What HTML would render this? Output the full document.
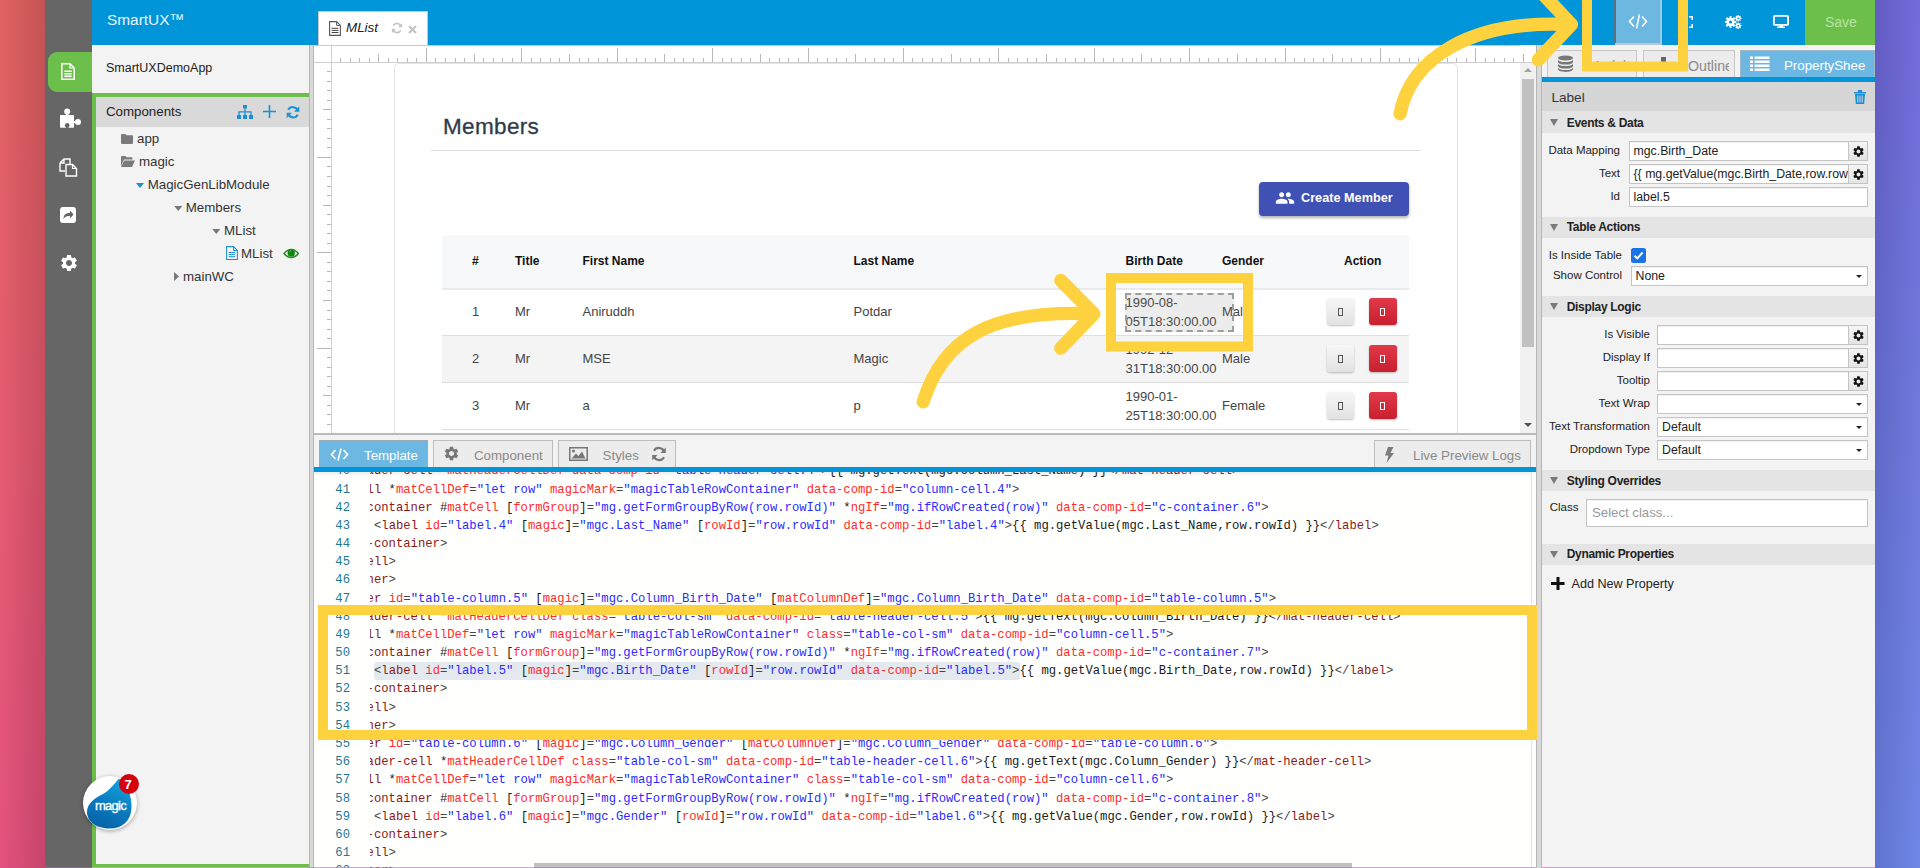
<!DOCTYPE html>
<html><head><meta charset="utf-8">
<style>
*{box-sizing:border-box;margin:0;padding:0}
html,body{width:1920px;height:868px;overflow:hidden;background:#fff;font-family:"Liberation Sans",sans-serif;color:#333}
.a{position:absolute}
.t{position:absolute;white-space:pre;line-height:1}
#lstrip{left:0;top:0;width:45px;height:868px;background:linear-gradient(180deg,#e0605f 0%,#e6596e 50%,#e34f7c 100%)}
#lstrip:after{content:"";position:absolute;left:0;top:0;width:45px;height:868px;background:linear-gradient(90deg,rgba(255,255,255,0.02),rgba(0,0,0,0.13))}
#rstrip{left:1875px;top:0;width:45px;height:868px;background:linear-gradient(180deg,#6e66d8 0%,#6a75dc 50%,#6a82e6 100%)}
#rstrip:after{content:"";position:absolute;left:0;top:0;width:45px;height:868px;background:linear-gradient(90deg,rgba(0,0,0,0.10),rgba(255,255,255,0.04))}
#side{left:45px;top:0;width:47px;height:868px;background:#666}
#hdr{left:92px;top:0;width:1783px;height:45px;background:#0095d9}

/* header */
#brand{left:107px;top:12.3px;font-size:15.4px;color:#e8f4fb}
#tab{left:318px;top:11px;width:110px;height:35px;background:#fff;border:1px solid #c8c8c8;border-bottom:none}
#tool-code{left:1614px;top:0;width:48px;height:43px;background:#6db8e1;border-left:1px solid #3f7fa6;border-right:2px solid #9ccbe6}
#save{left:1805px;top:0;width:70px;height:45px;background:#6cbf4a}
#save span{position:absolute;left:20px;top:14px;font-size:14px;color:#b9e2a6}
/* left panel */
#lp{left:92px;top:45px;width:217px;height:823px;background:#f3f3f3}
#lpgreen{left:92px;top:93px;width:217px;height:774px;border-left:4px solid #6cbf4a;border-top:4px solid #6cbf4a;border-bottom:3px solid #6cbf4a}
#comphdr{left:96px;top:97px;width:213px;height:30px;background:#d9d9d9}
#actnav{left:48px;top:52px;width:44px;height:40px;background:#6cbf4a;border-radius:9px 0 0 9px}
#split1{left:309px;top:45px;width:5px;height:823px;background:#d9d9d9;border-left:1px solid #b5b5b5;border-right:1px solid #b5b5b5}
.tree{font-size:13.3px;color:#333}

#center{left:314px;top:45px;width:1222px;height:823px;background:#fff}
#rulertop{left:314px;top:45px;width:1206px;height:1px;background:#c9c9c9}
#rulerh{left:314px;top:62px;width:1218px;height:1px;background:#cfcfcf}
#rulerv{left:331px;top:45px;width:1px;height:389px;background:#d0d0d0}
#card{left:394px;top:63px;width:1064px;height:400px;border:1px solid #e3e3e3;border-radius:5px;background:#fff}
#vscroll{left:1520px;top:63px;width:16px;height:371px;background:#f1f1f1}
#vthumb{left:1522px;top:79px;width:12px;height:268px;background:#c1c1c1}
#canvasbot{left:314px;top:433px;width:1222px;height:2px;background:#b9b9b9}
#tabbar{left:314px;top:435px;width:1222px;height:32px;background:#f3f3f3}
#blueline{left:314px;top:467px;width:1222px;height:4.6px;background:#0095d9}
#split2{left:1536px;top:45px;width:6px;height:823px;background:#d9d9d9;border-left:1px solid #b5b5b5;border-right:1px solid #b5b5b5}

.rob{font-family:"Liberation Sans",sans-serif}
#members{left:443px;top:115.5px;font-size:22.5px;letter-spacing:0.35px;color:#2f3b4b;-webkit-text-stroke:0.3px #2f3b4b}
#hr{left:431px;top:150px;width:990px;height:1px;background:#dcdcdc}
#cbtn{left:1259px;top:182px;width:150px;height:34px;background:#3f51b5;border-radius:4px;box-shadow:0 2px 3px rgba(0,0,0,0.3)}
#cbtn span{position:absolute;left:42px;top:10px;font-size:12.7px;font-weight:bold;color:#fff;white-space:pre;line-height:1}
#thead{left:442px;top:235px;width:967px;height:53px;background:#f7f8fa}
.hb{border-top:2px solid #e6e8ea}
.th{font-size:12px;font-weight:bold;color:#111}
.td{font-size:13px;color:#444}
.btng{width:27px;height:27px;border-radius:3px;background:linear-gradient(#f6f6f6,#e2e2e2);box-shadow:0 1px 2px rgba(0,0,0,0.25)}
.btnr{width:28px;height:27px;border-radius:3px;background:linear-gradient(#e0394a,#c9202f);box-shadow:0 1px 2px rgba(0,0,0,0.25)}
.tofu{position:absolute;left:11px;top:9.5px;width:5px;height:8px;border:1px solid #555}
.btnr .tofu{border-color:#fff}

.tabb{position:absolute;top:440px;height:27px;background:#ececec;border:1px solid #bdbdbd;border-bottom:none}
.tabb .t{font-size:13.3px;color:#8a8a8a;top:8px}
#code{left:314px;top:471px;width:1217px;height:397px;background:#fffffe;overflow:hidden}
#codeedge{left:1531px;top:471px;width:5px;height:397px;background:#fff;border-left:1px solid #e4e4e4}
#codeshadow{left:314px;top:471px;width:1217px;height:6px;background:linear-gradient(rgba(0,0,0,0.08),rgba(0,0,0,0))}
#nums{position:absolute;left:0;top:9.5px;width:36px;height:400px}
.ln{position:absolute;left:0;width:36px;text-align:right;font-family:"Liberation Mono",monospace;font-size:12.22px;line-height:18px;color:#237893;white-space:pre}
#clip{position:absolute;left:56px;top:0;width:1161px;height:397px;overflow:hidden}
#lines{position:absolute;left:-3.4px;top:9.5px}
.cl{position:absolute;left:0;font-family:"Liberation Mono",monospace;font-size:12.22px;line-height:18px;white-space:pre;color:#000}
.cd{color:#454545}.cg{color:#8a1a1a}.cr{color:#ff2b2b}.cv{color:#2b2bff}.cx{color:#1a1a1a}
#sel51{position:absolute;left:3.6px;top:191.1px;width:646px;height:18px;background:#e4e9f0;border-radius:3px}
#hthumb{left:534px;top:863px;width:818px;height:5px;background:#c1c1c1}
#pinkline{left:45px;top:867px;width:1830px;height:1px;background:rgba(214,88,178,0.6)}

#pp{left:1542px;top:45px;width:333px;height:823px;background:#f3f3f3}
.ptab{position:absolute;top:50px;height:27px;background:#ececec;border:1px solid #c6c6c6;border-bottom:none;overflow:hidden}
#pblue{left:1542px;top:77px;width:333px;height:5px;background:#0095d9}
#plabel{left:1542px;top:82px;width:333px;height:29px;background:#d6d6d6}
.sec{position:absolute;left:1542px;width:333px;background:#e4e4e4}
.tri{position:absolute;left:8px;width:0;height:0;border-left:4.5px solid transparent;border-right:4.5px solid transparent;border-top:7px solid #7a7a7a}
.sect{position:absolute;left:24.7px;font-size:12px;font-weight:bold;color:#222;letter-spacing:-0.3px;white-space:pre;line-height:1}
.pl{position:absolute;font-size:11.5px;color:#222;white-space:pre;line-height:1;text-align:right}
.inp{position:absolute;background:#fff;border:1px solid #c4c4c4;box-shadow:inset 0 1px 1px rgba(0,0,0,0.06)}
.inp .v{position:absolute;left:4px;font-size:12.3px;color:#222;white-space:pre;line-height:1}
.gear{position:absolute;right:0;top:0;width:19px;height:100%;background:linear-gradient(#f4f4f4,#e4e4e4);border-left:1px solid #c4c4c4}
.gear svg{position:absolute;left:3px;top:2.5px}
.caret{position:absolute;right:5px;width:0;height:0;border-left:3.5px solid transparent;border-right:3.5px solid transparent;border-top:3.5px solid #222}

#vup{left:1524px;top:68px;width:0;height:0;border-left:4px solid transparent;border-right:4px solid transparent;border-bottom:4px solid #a3a3a3}
#vdown{left:1524px;top:423px;width:0;height:0;border-left:4px solid transparent;border-right:4px solid transparent;border-top:4px solid #505050}
</style></head><body>
<div id="lstrip" class="a"></div>
<div id="rstrip" class="a"></div>
<div id="side" class="a"></div>
<div id="hdr" class="a"></div>

<div id="brand" class="t">SmartUX™</div>
<div id="tab" class="a"></div>
<div id="tool-code" class="a"></div>
<div id="save" class="a"><span>Save</span></div>

<div id="lp" class="a"></div>
<div id="actnav" class="a"></div>
<div id="lpgreen" class="a"></div>
<div id="comphdr" class="a"></div>
<div id="split1" class="a"></div>
<div id="center" class="a"></div>
<div id="card" class="a"></div>
<div id="rulertop" class="a"></div>
<div id="rulerh" class="a"></div>
<div id="rulerv" class="a"></div>
<svg class="a" style="left:0;top:0" width="1920" height="868" viewBox="0 0 1920 868">
<g stroke="#b8b8b8" stroke-width="1" shape-rendering="crispEdges"><line x1="340.54" y1="58" x2="340.54" y2="62" /><line x1="350.08" y1="58" x2="350.08" y2="62" /><line x1="359.62" y1="58" x2="359.62" y2="62" /><line x1="369.16" y1="58" x2="369.16" y2="62" /><line x1="378.70" y1="54" x2="378.70" y2="62" /><line x1="388.24" y1="58" x2="388.24" y2="62" /><line x1="397.78" y1="58" x2="397.78" y2="62" /><line x1="407.32" y1="58" x2="407.32" y2="62" /><line x1="416.86" y1="58" x2="416.86" y2="62" /><line x1="426.40" y1="48" x2="426.40" y2="62" /><line x1="435.94" y1="58" x2="435.94" y2="62" /><line x1="445.48" y1="58" x2="445.48" y2="62" /><line x1="455.02" y1="58" x2="455.02" y2="62" /><line x1="464.56" y1="58" x2="464.56" y2="62" /><line x1="474.10" y1="54" x2="474.10" y2="62" /><line x1="483.64" y1="58" x2="483.64" y2="62" /><line x1="493.18" y1="58" x2="493.18" y2="62" /><line x1="502.72" y1="58" x2="502.72" y2="62" /><line x1="512.26" y1="58" x2="512.26" y2="62" /><line x1="521.80" y1="48" x2="521.80" y2="62" /><line x1="531.34" y1="58" x2="531.34" y2="62" /><line x1="540.88" y1="58" x2="540.88" y2="62" /><line x1="550.42" y1="58" x2="550.42" y2="62" /><line x1="559.96" y1="58" x2="559.96" y2="62" /><line x1="569.50" y1="54" x2="569.50" y2="62" /><line x1="579.04" y1="58" x2="579.04" y2="62" /><line x1="588.58" y1="58" x2="588.58" y2="62" /><line x1="598.12" y1="58" x2="598.12" y2="62" /><line x1="607.66" y1="58" x2="607.66" y2="62" /><line x1="617.20" y1="48" x2="617.20" y2="62" /><line x1="626.74" y1="58" x2="626.74" y2="62" /><line x1="636.28" y1="58" x2="636.28" y2="62" /><line x1="645.82" y1="58" x2="645.82" y2="62" /><line x1="655.36" y1="58" x2="655.36" y2="62" /><line x1="664.90" y1="54" x2="664.90" y2="62" /><line x1="674.44" y1="58" x2="674.44" y2="62" /><line x1="683.98" y1="58" x2="683.98" y2="62" /><line x1="693.52" y1="58" x2="693.52" y2="62" /><line x1="703.06" y1="58" x2="703.06" y2="62" /><line x1="712.60" y1="48" x2="712.60" y2="62" /><line x1="722.14" y1="58" x2="722.14" y2="62" /><line x1="731.68" y1="58" x2="731.68" y2="62" /><line x1="741.22" y1="58" x2="741.22" y2="62" /><line x1="750.76" y1="58" x2="750.76" y2="62" /><line x1="760.30" y1="54" x2="760.30" y2="62" /><line x1="769.84" y1="58" x2="769.84" y2="62" /><line x1="779.38" y1="58" x2="779.38" y2="62" /><line x1="788.92" y1="58" x2="788.92" y2="62" /><line x1="798.46" y1="58" x2="798.46" y2="62" /><line x1="808.00" y1="48" x2="808.00" y2="62" /><line x1="817.54" y1="58" x2="817.54" y2="62" /><line x1="827.08" y1="58" x2="827.08" y2="62" /><line x1="836.62" y1="58" x2="836.62" y2="62" /><line x1="846.16" y1="58" x2="846.16" y2="62" /><line x1="855.70" y1="54" x2="855.70" y2="62" /><line x1="865.24" y1="58" x2="865.24" y2="62" /><line x1="874.78" y1="58" x2="874.78" y2="62" /><line x1="884.32" y1="58" x2="884.32" y2="62" /><line x1="893.86" y1="58" x2="893.86" y2="62" /><line x1="903.40" y1="48" x2="903.40" y2="62" /><line x1="912.94" y1="58" x2="912.94" y2="62" /><line x1="922.48" y1="58" x2="922.48" y2="62" /><line x1="932.02" y1="58" x2="932.02" y2="62" /><line x1="941.56" y1="58" x2="941.56" y2="62" /><line x1="951.10" y1="54" x2="951.10" y2="62" /><line x1="960.64" y1="58" x2="960.64" y2="62" /><line x1="970.18" y1="58" x2="970.18" y2="62" /><line x1="979.72" y1="58" x2="979.72" y2="62" /><line x1="989.26" y1="58" x2="989.26" y2="62" /><line x1="998.80" y1="48" x2="998.80" y2="62" /><line x1="1008.34" y1="58" x2="1008.34" y2="62" /><line x1="1017.88" y1="58" x2="1017.88" y2="62" /><line x1="1027.42" y1="58" x2="1027.42" y2="62" /><line x1="1036.96" y1="58" x2="1036.96" y2="62" /><line x1="1046.50" y1="54" x2="1046.50" y2="62" /><line x1="1056.04" y1="58" x2="1056.04" y2="62" /><line x1="1065.58" y1="58" x2="1065.58" y2="62" /><line x1="1075.12" y1="58" x2="1075.12" y2="62" /><line x1="1084.66" y1="58" x2="1084.66" y2="62" /><line x1="1094.20" y1="48" x2="1094.20" y2="62" /><line x1="1103.74" y1="58" x2="1103.74" y2="62" /><line x1="1113.28" y1="58" x2="1113.28" y2="62" /><line x1="1122.82" y1="58" x2="1122.82" y2="62" /><line x1="1132.36" y1="58" x2="1132.36" y2="62" /><line x1="1141.90" y1="54" x2="1141.90" y2="62" /><line x1="1151.44" y1="58" x2="1151.44" y2="62" /><line x1="1160.98" y1="58" x2="1160.98" y2="62" /><line x1="1170.52" y1="58" x2="1170.52" y2="62" /><line x1="1180.06" y1="58" x2="1180.06" y2="62" /><line x1="1189.60" y1="48" x2="1189.60" y2="62" /><line x1="1199.14" y1="58" x2="1199.14" y2="62" /><line x1="1208.68" y1="58" x2="1208.68" y2="62" /><line x1="1218.22" y1="58" x2="1218.22" y2="62" /><line x1="1227.76" y1="58" x2="1227.76" y2="62" /><line x1="1237.30" y1="54" x2="1237.30" y2="62" /><line x1="1246.84" y1="58" x2="1246.84" y2="62" /><line x1="1256.38" y1="58" x2="1256.38" y2="62" /><line x1="1265.92" y1="58" x2="1265.92" y2="62" /><line x1="1275.46" y1="58" x2="1275.46" y2="62" /><line x1="1285.00" y1="48" x2="1285.00" y2="62" /><line x1="1294.54" y1="58" x2="1294.54" y2="62" /><line x1="1304.08" y1="58" x2="1304.08" y2="62" /><line x1="1313.62" y1="58" x2="1313.62" y2="62" /><line x1="1323.16" y1="58" x2="1323.16" y2="62" /><line x1="1332.70" y1="54" x2="1332.70" y2="62" /><line x1="1342.24" y1="58" x2="1342.24" y2="62" /><line x1="1351.78" y1="58" x2="1351.78" y2="62" /><line x1="1361.32" y1="58" x2="1361.32" y2="62" /><line x1="1370.86" y1="58" x2="1370.86" y2="62" /><line x1="1380.40" y1="48" x2="1380.40" y2="62" /><line x1="1389.94" y1="58" x2="1389.94" y2="62" /><line x1="1399.48" y1="58" x2="1399.48" y2="62" /><line x1="1409.02" y1="58" x2="1409.02" y2="62" /><line x1="1418.56" y1="58" x2="1418.56" y2="62" /><line x1="1428.10" y1="54" x2="1428.10" y2="62" /><line x1="1437.64" y1="58" x2="1437.64" y2="62" /><line x1="1447.18" y1="58" x2="1447.18" y2="62" /><line x1="1456.72" y1="58" x2="1456.72" y2="62" /><line x1="1466.26" y1="58" x2="1466.26" y2="62" /><line x1="1475.80" y1="48" x2="1475.80" y2="62" /><line x1="1485.34" y1="58" x2="1485.34" y2="62" /><line x1="1494.88" y1="58" x2="1494.88" y2="62" /><line x1="1504.42" y1="58" x2="1504.42" y2="62" /><line x1="1513.96" y1="58" x2="1513.96" y2="62" /><line x1="327" y1="71.54" x2="331" y2="71.54" /><line x1="327" y1="81.08" x2="331" y2="81.08" /><line x1="327" y1="90.62" x2="331" y2="90.62" /><line x1="327" y1="100.16" x2="331" y2="100.16" /><line x1="323" y1="109.70" x2="331" y2="109.70" /><line x1="327" y1="119.24" x2="331" y2="119.24" /><line x1="327" y1="128.78" x2="331" y2="128.78" /><line x1="327" y1="138.32" x2="331" y2="138.32" /><line x1="327" y1="147.86" x2="331" y2="147.86" /><line x1="317" y1="157.40" x2="331" y2="157.40" /><line x1="327" y1="166.94" x2="331" y2="166.94" /><line x1="327" y1="176.48" x2="331" y2="176.48" /><line x1="327" y1="186.02" x2="331" y2="186.02" /><line x1="327" y1="195.56" x2="331" y2="195.56" /><line x1="323" y1="205.10" x2="331" y2="205.10" /><line x1="327" y1="214.64" x2="331" y2="214.64" /><line x1="327" y1="224.18" x2="331" y2="224.18" /><line x1="327" y1="233.72" x2="331" y2="233.72" /><line x1="327" y1="243.26" x2="331" y2="243.26" /><line x1="317" y1="252.80" x2="331" y2="252.80" /><line x1="327" y1="262.34" x2="331" y2="262.34" /><line x1="327" y1="271.88" x2="331" y2="271.88" /><line x1="327" y1="281.42" x2="331" y2="281.42" /><line x1="327" y1="290.96" x2="331" y2="290.96" /><line x1="323" y1="300.50" x2="331" y2="300.50" /><line x1="327" y1="310.04" x2="331" y2="310.04" /><line x1="327" y1="319.58" x2="331" y2="319.58" /><line x1="327" y1="329.12" x2="331" y2="329.12" /><line x1="327" y1="338.66" x2="331" y2="338.66" /><line x1="317" y1="348.20" x2="331" y2="348.20" /><line x1="327" y1="357.74" x2="331" y2="357.74" /><line x1="327" y1="367.28" x2="331" y2="367.28" /><line x1="327" y1="376.82" x2="331" y2="376.82" /><line x1="327" y1="386.36" x2="331" y2="386.36" /><line x1="323" y1="395.90" x2="331" y2="395.90" /><line x1="327" y1="405.44" x2="331" y2="405.44" /><line x1="327" y1="414.98" x2="331" y2="414.98" /><line x1="327" y1="424.52" x2="331" y2="424.52" /><line x1="1523.30" y1="54" x2="1523.30" y2="62" /></g>
</svg>

<div id="members" class="t">Members</div>
<div id="hr" class="a"></div>
<div id="cbtn" class="a"><span>Create Member</span>
<svg class="a" style="left:16px;top:9px" width="20" height="14" viewBox="0 0 24 16"><path fill="#fff" d="M16 7c1.66 0 2.99-1.34 2.99-3S17.66 1 16 1c-1.66 0-3 1.34-3 3s1.34 3 3 3zm-8 0c1.66 0 2.99-1.34 2.99-3S9.66 1 8 1C6.34 1 5 2.34 5 4s1.34 3 3 3zm0 2c-2.33 0-7 1.17-7 3.5V15h14v-2.5C15 10.17 10.33 9 8 9zm8 0c-.29 0-.62.02-.97.05 1.16.84 1.97 1.97 1.97 3.45V15h6v-2.5c0-2.33-4.67-3.5-7-3.5z"/></svg>
</div>
<div id="thead" class="a"></div>
<div class="a" style="left:442px;top:288px;width:967px;height:2px;background:#e8e9eb"></div>
<div class="a" style="left:442px;top:335px;width:967px;height:1px;background:#dedede"></div><div class="a" style="left:442px;top:336px;width:967px;height:46px;background:#f4f4f4"></div><div class="a" style="left:442px;top:382px;width:967px;height:1px;background:#dedede"></div><div class="a" style="left:442px;top:429px;width:967px;height:1px;background:#dedede"></div><div class="t th" style="left:472px;top:255.4px">#</div><div class="t th" style="left:515px;top:255.4px">Title</div><div class="t th" style="left:582.5px;top:255.4px">First Name</div><div class="t th" style="left:853.5px;top:255.4px">Last Name</div><div class="t th" style="left:1125.5px;top:255.4px">Birth Date</div><div class="t th" style="left:1222px;top:255.4px">Gender</div><div class="t th" style="left:1344px;top:255.4px">Action</div><div class="t td" style="left:472px;top:305.4px">1</div><div class="t td" style="left:515px;top:305.4px">Mr</div><div class="t td" style="left:582.5px;top:305.4px">Aniruddh</div><div class="t td" style="left:853.5px;top:305.4px">Potdar</div><div class="t td" style="left:1222px;top:305.4px">Mal</div><div class="t td" style="left:1125.5px;top:295.6px">1990-08-</div><div class="t td" style="left:1125.5px;top:315.3px">05T18:30:00.00</div><div class="a btng" style="left:1326.5px;top:298.4px"><div class="tofu"></div></div><div class="a btnr" style="left:1369px;top:298.4px"><div class="tofu"></div></div><div class="t td" style="left:472px;top:352.4px">2</div><div class="t td" style="left:515px;top:352.4px">Mr</div><div class="t td" style="left:582.5px;top:352.4px">MSE</div><div class="t td" style="left:853.5px;top:352.4px">Magic</div><div class="t td" style="left:1222px;top:352.4px">Male</div><div class="t td" style="left:1125.5px;top:342.6px">1992-12-</div><div class="t td" style="left:1125.5px;top:362.3px">31T18:30:00.00</div><div class="a btng" style="left:1326.5px;top:345.4px"><div class="tofu"></div></div><div class="a btnr" style="left:1369px;top:345.4px"><div class="tofu"></div></div><div class="t td" style="left:472px;top:399.4px">3</div><div class="t td" style="left:515px;top:399.4px">Mr</div><div class="t td" style="left:582.5px;top:399.4px">a</div><div class="t td" style="left:853.5px;top:399.4px">p</div><div class="t td" style="left:1222px;top:399.4px">Female</div><div class="t td" style="left:1125.5px;top:389.6px">1990-01-</div><div class="t td" style="left:1125.5px;top:409.3px">25T18:30:00.00</div><div class="a btng" style="left:1326.5px;top:392px"><div class="tofu"></div></div><div class="a btnr" style="left:1369px;top:392px"><div class="tofu"></div></div>
<div id="vscroll" class="a"></div>
<div id="vthumb" class="a"></div>
<div id="canvasbot" class="a"></div>
<div id="tabbar" class="a"></div>

<div class="tabb" style="left:319px;width:109px;background:#6cb8e2;border-color:#9aa9b3"><div class="t" style="left:44px;color:#fff">Template</div>
<svg class="a" style="left:10px;top:7px" width="19" height="13" viewBox="0 0 19 13"><path d="M5.5 2 L1.5 6.5 L5.5 11 M13.5 2 L17.5 6.5 L13.5 11 M11 0.5 L8 12.5" stroke="#fff" stroke-width="1.6" fill="none"/></svg></div>
<div class="tabb" style="left:433px;width:120px"><div class="t" style="left:40px">Component</div>
<svg class="a" style="left:8.5px;top:4px" width="17" height="17" viewBox="0 0 24 24"><path fill="#777" d="M19.14 12.94c.04-.3.06-.61.06-.94 0-.32-.02-.64-.07-.94l2.03-1.58a.49.49 0 0 0 .12-.61l-1.92-3.32a.488.488 0 0 0-.59-.22l-2.39.96c-.5-.38-1.03-.7-1.62-.94l-.36-2.54a.484.484 0 0 0-.48-.41h-3.84c-.24 0-.43.17-.47.41l-.36 2.54c-.59.24-1.13.57-1.62.94l-2.39-.96c-.22-.08-.47 0-.59.22L2.74 8.87c-.12.21-.08.47.12.61l2.03 1.58c-.05.3-.09.63-.09.94s.02.64.07.94l-2.03 1.58a.49.49 0 0 0-.12.61l1.92 3.32c.12.22.37.29.59.22l2.39-.96c.5.38 1.03.7 1.62.94l.36 2.54c.05.24.24.41.48.41h3.84c.24 0 .44-.17.47-.41l.36-2.54c.59-.24 1.13-.56 1.62-.94l2.39.96c.22.08.47 0 .59-.22l1.92-3.32c.12-.22.07-.47-.12-.61l-2.01-1.58zM12 15.6c-1.98 0-3.6-1.62-3.6-3.6s1.62-3.6 3.6-3.6 3.6 1.62 3.6 3.6-1.62 3.6-3.6 3.6z"/></svg></div>
<div class="tabb" style="left:557.6px;width:118.4px"><div class="t" style="left:44px">Styles</div>
<svg class="a" style="left:10px;top:6px" width="19" height="14" viewBox="0 0 19 14"><rect x="0.75" y="0.75" width="17.5" height="12.5" fill="none" stroke="#777" stroke-width="1.5"/><circle cx="4.5" cy="4" r="1.5" fill="#777"/><path d="M2.5 11.5 L7 6.5 L9.5 9 L13 4.5 L16.5 11.5 Z" fill="#777"/></svg>
<svg class="a" style="left:92px;top:5px" width="16" height="16" viewBox="0 0 16 16"><path d="M13.2 6.2 A5.5 5.5 0 0 0 3 4.8 M2.8 9.8 A5.5 5.5 0 0 0 13 11.2" stroke="#777" stroke-width="2.2" fill="none"/><path d="M14.8 1.5 L14.8 7 L9.5 7 Z M1.2 14.5 L1.2 9 L6.5 9 Z" fill="#777"/></svg></div>
<div class="tabb" style="left:1374px;width:157px"><div class="t" style="left:38px">Live Preview Logs</div>
<svg class="a" style="left:9px;top:6px" width="11" height="16" viewBox="0 0 11 16"><path d="M4 0 L9.5 0 L6.5 6 L10 6 L2.5 16 L4.5 8.5 L1 8.5 Z" fill="#7b7b7b"/></svg></div>
<div id="code" class="a">
<div id="nums"><div class="ln" style="top:-18.18px">40</div>
<div class="ln" style="top:0.00px">41</div>
<div class="ln" style="top:18.18px">42</div>
<div class="ln" style="top:36.36px">43</div>
<div class="ln" style="top:54.54px">44</div>
<div class="ln" style="top:72.72px">45</div>
<div class="ln" style="top:90.90px">46</div>
<div class="ln" style="top:109.08px">47</div>
<div class="ln" style="top:127.26px">48</div>
<div class="ln" style="top:145.44px">49</div>
<div class="ln" style="top:163.62px">50</div>
<div class="ln" style="top:181.80px">51</div>
<div class="ln" style="top:199.98px">52</div>
<div class="ln" style="top:218.16px">53</div>
<div class="ln" style="top:236.34px">54</div>
<div class="ln" style="top:254.52px">55</div>
<div class="ln" style="top:272.70px">56</div>
<div class="ln" style="top:290.88px">57</div>
<div class="ln" style="top:309.06px">58</div>
<div class="ln" style="top:327.24px">59</div>
<div class="ln" style="top:345.42px">60</div>
<div class="ln" style="top:363.60px">61</div>
<div class="ln" style="top:381.78px">62</div></div>
<div id="clip"><div id="sel51"></div><div id="lines"><div class="cl" style="top:-18.18px"><span class="cg">ader-cell</span><span class="cx"> *</span><span class="cr">matHeaderCellDef</span><span class="cx"> </span><span class="cr">data-comp-id</span><span class="cd">=</span><span class="cv">&quot;table-header-cell.4&quot;</span><span class="cd">&gt;</span><span class="cx">{{ mg.getText(mgc.Column_Last_Name) }}</span><span class="cd">&lt;/</span><span class="cg">mat-header-cell</span><span class="cd">&gt;</span></div>
<div class="cl" style="top:0.00px"><span class="cg">ll</span><span class="cx"> *</span><span class="cr">matCellDef</span><span class="cd">=</span><span class="cv">&quot;let row&quot;</span><span class="cx"> </span><span class="cr">magicMark</span><span class="cd">=</span><span class="cv">&quot;magicTableRowContainer&quot;</span><span class="cx"> </span><span class="cr">data-comp-id</span><span class="cd">=</span><span class="cv">&quot;column-cell.4&quot;</span><span class="cd">&gt;</span></div>
<div class="cl" style="top:18.18px"><span class="cg">container</span><span class="cx"> #</span><span class="cr">matCell</span><span class="cx"> [</span><span class="cr">formGroup</span><span class="cx">]</span><span class="cd">=</span><span class="cv">&quot;mg.getFormGroupByRow(row.rowId)&quot;</span><span class="cx"> *</span><span class="cr">ngIf</span><span class="cd">=</span><span class="cv">&quot;mg.ifRowCreated(row)&quot;</span><span class="cx"> </span><span class="cr">data-comp-id</span><span class="cd">=</span><span class="cv">&quot;c-container.6&quot;</span><span class="cd">&gt;</span></div>
<div class="cl" style="top:36.36px"><span class="cx"> </span><span class="cd">&lt;</span><span class="cg">label</span><span class="cx"> </span><span class="cr">id</span><span class="cd">=</span><span class="cv">&quot;label.4&quot;</span><span class="cx"> [</span><span class="cr">magic</span><span class="cx">]</span><span class="cd">=</span><span class="cv">&quot;mgc.Last_Name&quot;</span><span class="cx"> [</span><span class="cr">rowId</span><span class="cx">]</span><span class="cd">=</span><span class="cv">&quot;row.rowId&quot;</span><span class="cx"> </span><span class="cr">data-comp-id</span><span class="cd">=</span><span class="cv">&quot;label.4&quot;</span><span class="cd">&gt;</span><span class="cx">{{ mg.getValue(mgc.Last_Name,row.rowId) }}</span><span class="cd">&lt;/</span><span class="cg">label</span><span class="cd">&gt;</span></div>
<div class="cl" style="top:54.54px"><span class="cg">-container</span><span class="cd">&gt;</span></div>
<div class="cl" style="top:72.72px"><span class="cg">ell</span><span class="cd">&gt;</span></div>
<div class="cl" style="top:90.90px"><span class="cg">ner</span><span class="cd">&gt;</span></div>
<div class="cl" style="top:109.08px"><span class="cg">er</span><span class="cx"> </span><span class="cr">id</span><span class="cd">=</span><span class="cv">&quot;table-column.5&quot;</span><span class="cx"> [</span><span class="cr">magic</span><span class="cx">]</span><span class="cd">=</span><span class="cv">&quot;mgc.Column_Birth_Date&quot;</span><span class="cx"> [</span><span class="cr">matColumnDef</span><span class="cx">]</span><span class="cd">=</span><span class="cv">&quot;mgc.Column_Birth_Date&quot;</span><span class="cx"> </span><span class="cr">data-comp-id</span><span class="cd">=</span><span class="cv">&quot;table-column.5&quot;</span><span class="cd">&gt;</span></div>
<div class="cl" style="top:127.26px"><span class="cg">ader-cell</span><span class="cx"> *</span><span class="cr">matHeaderCellDef</span><span class="cx"> </span><span class="cr">class</span><span class="cd">=</span><span class="cv">&quot;table-col-sm&quot;</span><span class="cx"> </span><span class="cr">data-comp-id</span><span class="cd">=</span><span class="cv">&quot;table-header-cell.5&quot;</span><span class="cd">&gt;</span><span class="cx">{{ mg.getText(mgc.Column_Birth_Date) }}</span><span class="cd">&lt;/</span><span class="cg">mat-header-cell</span><span class="cd">&gt;</span></div>
<div class="cl" style="top:145.44px"><span class="cg">ll</span><span class="cx"> *</span><span class="cr">matCellDef</span><span class="cd">=</span><span class="cv">&quot;let row&quot;</span><span class="cx"> </span><span class="cr">magicMark</span><span class="cd">=</span><span class="cv">&quot;magicTableRowContainer&quot;</span><span class="cx"> </span><span class="cr">class</span><span class="cd">=</span><span class="cv">&quot;table-col-sm&quot;</span><span class="cx"> </span><span class="cr">data-comp-id</span><span class="cd">=</span><span class="cv">&quot;column-cell.5&quot;</span><span class="cd">&gt;</span></div>
<div class="cl" style="top:163.62px"><span class="cg">container</span><span class="cx"> #</span><span class="cr">matCell</span><span class="cx"> [</span><span class="cr">formGroup</span><span class="cx">]</span><span class="cd">=</span><span class="cv">&quot;mg.getFormGroupByRow(row.rowId)&quot;</span><span class="cx"> *</span><span class="cr">ngIf</span><span class="cd">=</span><span class="cv">&quot;mg.ifRowCreated(row)&quot;</span><span class="cx"> </span><span class="cr">data-comp-id</span><span class="cd">=</span><span class="cv">&quot;c-container.7&quot;</span><span class="cd">&gt;</span></div>
<div class="cl" style="top:181.80px"><span class="cx"> </span><span class="cd">&lt;</span><span class="cg">label</span><span class="cx"> </span><span class="cr">id</span><span class="cd">=</span><span class="cv">&quot;label.5&quot;</span><span class="cx"> [</span><span class="cr">magic</span><span class="cx">]</span><span class="cd">=</span><span class="cv">&quot;mgc.Birth_Date&quot;</span><span class="cx"> [</span><span class="cr">rowId</span><span class="cx">]</span><span class="cd">=</span><span class="cv">&quot;row.rowId&quot;</span><span class="cx"> </span><span class="cr">data-comp-id</span><span class="cd">=</span><span class="cv">&quot;label.5&quot;</span><span class="cd">&gt;</span><span class="cx">{{ mg.getValue(mgc.Birth_Date,row.rowId) }}</span><span class="cd">&lt;/</span><span class="cg">label</span><span class="cd">&gt;</span></div>
<div class="cl" style="top:199.98px"><span class="cg">-container</span><span class="cd">&gt;</span></div>
<div class="cl" style="top:218.16px"><span class="cg">ell</span><span class="cd">&gt;</span></div>
<div class="cl" style="top:236.34px"><span class="cg">ner</span><span class="cd">&gt;</span></div>
<div class="cl" style="top:254.52px"><span class="cg">er</span><span class="cx"> </span><span class="cr">id</span><span class="cd">=</span><span class="cv">&quot;table-column.6&quot;</span><span class="cx"> [</span><span class="cr">magic</span><span class="cx">]</span><span class="cd">=</span><span class="cv">&quot;mgc.Column_Gender&quot;</span><span class="cx"> [</span><span class="cr">matColumnDef</span><span class="cx">]</span><span class="cd">=</span><span class="cv">&quot;mgc.Column_Gender&quot;</span><span class="cx"> </span><span class="cr">data-comp-id</span><span class="cd">=</span><span class="cv">&quot;table-column.6&quot;</span><span class="cd">&gt;</span></div>
<div class="cl" style="top:272.70px"><span class="cg">ader-cell</span><span class="cx"> *</span><span class="cr">matHeaderCellDef</span><span class="cx"> </span><span class="cr">class</span><span class="cd">=</span><span class="cv">&quot;table-col-sm&quot;</span><span class="cx"> </span><span class="cr">data-comp-id</span><span class="cd">=</span><span class="cv">&quot;table-header-cell.6&quot;</span><span class="cd">&gt;</span><span class="cx">{{ mg.getText(mgc.Column_Gender) }}</span><span class="cd">&lt;/</span><span class="cg">mat-header-cell</span><span class="cd">&gt;</span></div>
<div class="cl" style="top:290.88px"><span class="cg">ll</span><span class="cx"> *</span><span class="cr">matCellDef</span><span class="cd">=</span><span class="cv">&quot;let row&quot;</span><span class="cx"> </span><span class="cr">magicMark</span><span class="cd">=</span><span class="cv">&quot;magicTableRowContainer&quot;</span><span class="cx"> </span><span class="cr">class</span><span class="cd">=</span><span class="cv">&quot;table-col-sm&quot;</span><span class="cx"> </span><span class="cr">data-comp-id</span><span class="cd">=</span><span class="cv">&quot;column-cell.6&quot;</span><span class="cd">&gt;</span></div>
<div class="cl" style="top:309.06px"><span class="cg">container</span><span class="cx"> #</span><span class="cr">matCell</span><span class="cx"> [</span><span class="cr">formGroup</span><span class="cx">]</span><span class="cd">=</span><span class="cv">&quot;mg.getFormGroupByRow(row.rowId)&quot;</span><span class="cx"> *</span><span class="cr">ngIf</span><span class="cd">=</span><span class="cv">&quot;mg.ifRowCreated(row)&quot;</span><span class="cx"> </span><span class="cr">data-comp-id</span><span class="cd">=</span><span class="cv">&quot;c-container.8&quot;</span><span class="cd">&gt;</span></div>
<div class="cl" style="top:327.24px"><span class="cx"> </span><span class="cd">&lt;</span><span class="cg">label</span><span class="cx"> </span><span class="cr">id</span><span class="cd">=</span><span class="cv">&quot;label.6&quot;</span><span class="cx"> [</span><span class="cr">magic</span><span class="cx">]</span><span class="cd">=</span><span class="cv">&quot;mgc.Gender&quot;</span><span class="cx"> [</span><span class="cr">rowId</span><span class="cx">]</span><span class="cd">=</span><span class="cv">&quot;row.rowId&quot;</span><span class="cx"> </span><span class="cr">data-comp-id</span><span class="cd">=</span><span class="cv">&quot;label.6&quot;</span><span class="cd">&gt;</span><span class="cx">{{ mg.getValue(mgc.Gender,row.rowId) }}</span><span class="cd">&lt;/</span><span class="cg">label</span><span class="cd">&gt;</span></div>
<div class="cl" style="top:345.42px"><span class="cg">-container</span><span class="cd">&gt;</span></div>
<div class="cl" style="top:363.60px"><span class="cg">ell</span><span class="cd">&gt;</span></div>
<div class="cl" style="top:381.78px"><span class="cg">ner</span><span class="cd">&gt;</span></div></div></div>
</div>
<div id="codeshadow" class="a"></div>
<div id="codeedge" class="a"></div>
<div id="hthumb" class="a"></div>
<div id="pp" class="a"></div><div class="ptab" style="left:1547px;width:90px"><svg class="a" style="left:9px;top:4px" width="17" height="17" viewBox="0 0 17 17"><ellipse cx="8.5" cy="3" rx="7.5" ry="2.6" fill="#777"/><path d="M1 4.5 v2.5 c0 1.5 3.4 2.6 7.5 2.6 s7.5-1.1 7.5-2.6 v-2.5 c0 1.5-3.4 2.6-7.5 2.6 S1 6 1 4.5z M1 8.5 v2.5 c0 1.5 3.4 2.6 7.5 2.6 s7.5-1.1 7.5-2.6 v-2.5 c0 1.5-3.4 2.6-7.5 2.6 S1 10 1 8.5z M1 12.5 v1.8 c0 1.5 3.4 2.6 7.5 2.6 s7.5-1.1 7.5-2.6 v-1.8 c0 1.5-3.4 2.6-7.5 2.6 S1 14 1 12.5z" fill="#777"/></svg><div class="t" style="left:40px;top:8px;font-size:14px;color:#888">Model</div></div><div class="ptab" style="left:1643px;width:92px"><div class="a" style="left:17px;top:6px;width:5px;height:5px;background:#666"></div><div class="a" style="left:0;top:0;width:85px;height:27px;overflow:hidden"><div class="t" style="left:44px;top:8px;font-size:14.2px;color:#8a8a8a">Outline</div></div></div><div class="ptab" style="left:1740px;width:135px;background:#6cb8e2;border-color:#9db8c8"><svg class="a" style="left:9px;top:5px" width="20" height="15" viewBox="0 0 20 15"><g fill="#fff"><rect x="0" y="0.5" width="3" height="2.5"/><rect x="4.5" y="0.5" width="15" height="2.5"/><rect x="0" y="4.5" width="3" height="2.5"/><rect x="4.5" y="4.5" width="15" height="2.5"/><rect x="0" y="8.5" width="3" height="2.5"/><rect x="4.5" y="8.5" width="15" height="2.5"/><rect x="0" y="12.5" width="3" height="2.5"/><rect x="4.5" y="12.5" width="15" height="2.5"/></g></svg><div class="t" style="left:43px;top:8px;font-size:13.3px;color:#fff">PropertyShee</div></div><div id="pblue" class="a"></div><div id="plabel" class="a"></div><div class="t" style="left:1551.4px;top:90.6px;font-size:13.6px;color:#333">Label</div><svg class="a" style="left:1854px;top:90px" width="12" height="14" viewBox="0 0 12 14"><path fill="#1a8fd6" d="M0 2 h12 v1.5 h-12z M4 0 h4 v2 h-4z M1 4 h10 l-0.8 10 h-8.4z"/><path fill="#d6d6d6" d="M3.3 5.5 h1 v7 h-1z M5.5 5.5 h1 v7 h-1z M7.7 5.5 h1 v7 h-1z"/></svg><div class="sec" style="top:111px;height:22px"><div class="tri" style="top:7.5px"></div><div class="sect" style="top:6.1px">Events &amp; Data</div></div><div class="sec" style="top:217px;height:21px"><div class="tri" style="top:7.0px"></div><div class="sect" style="top:4.3px">Table Actions</div></div><div class="sec" style="top:296px;height:21px"><div class="tri" style="top:7.0px"></div><div class="sect" style="top:4.7px">Display Logic</div></div><div class="sec" style="top:470px;height:21px"><div class="tri" style="top:7.0px"></div><div class="sect" style="top:4.5px">Styling Overrides</div></div><div class="sec" style="top:544px;height:21px"><div class="tri" style="top:7.0px"></div><div class="sect" style="top:4.3px">Dynamic Properties</div></div><div class="pl" style="left:1320px;width:300px;top:145.3px">Data Mapping</div><div class="inp" style="left:1628.5px;top:141px;width:239.5px;height:20px"><div class="v" style="left:4px;top:3.2px;color:#222;font-size:12.3px">mgc.Birth_Date</div><div class="gear"><svg width="13" height="13" viewBox="0 0 24 24"><path fill="#111" d="M19.14 12.94c.04-.3.06-.61.06-.94 0-.32-.02-.64-.07-.94l2.030-1.58a.49.49 0 0 0 .12-.61l-1.92-3.32a.488.488 0 0 0-.59-.22l-2.39.96c-.5-.38-1.03-.7-1.62-.94l-.36-2.54a.484.484 0 0 0-.48-.41h-3.84c-.24 0-.43.17-.47.41l-.36 2.54c-.59.24-1.13.57-1.62.94l-2.39-.96c-.22-.08-.47 0-.59.22L2.74 8.87c-.12.21-.08.47.12.61l2.03 1.58c-.05.3-.09.63-.09.94s.02.64.07.94l-2.03 1.58a.49.49 0 0 0-.12.61l1.92 3.32c.12.22.37.29.59.22l2.39-.96c.5.38 1.03.7 1.62.94l.36 2.54c.05.24.24.41.48.41h3.84c.24 0 .44-.17.47-.41l.36-2.54c.59-.24 1.13-.56 1.62-.94l2.39.96c.22.08.47 0 .59-.22l1.92-3.32c.12-.22.07-.47-.12-.61l-2.01-1.58zM12 15.6c-1.98 0-3.6-1.62-3.6-3.6s1.62-3.6 3.6-3.6 3.6 1.62 3.6 3.6-1.62 3.6-3.6 3.6z"/></svg></div></div><div class="pl" style="left:1320px;width:300px;top:168.3px">Text</div><div class="inp" style="left:1628.5px;top:164px;width:239.5px;height:20px"><div class="v" style="left:4px;top:3.2px;color:#222;font-size:12.3px">{{ mg.getValue(mgc.Birth_Date,row.row</div><div class="gear"><svg width="13" height="13" viewBox="0 0 24 24"><path fill="#111" d="M19.14 12.94c.04-.3.06-.61.06-.94 0-.32-.02-.64-.07-.94l2.030-1.58a.49.49 0 0 0 .12-.61l-1.92-3.32a.488.488 0 0 0-.59-.22l-2.39.96c-.5-.38-1.03-.7-1.62-.94l-.36-2.54a.484.484 0 0 0-.48-.41h-3.84c-.24 0-.43.17-.47.41l-.36 2.54c-.59.24-1.13.57-1.62.94l-2.39-.96c-.22-.08-.47 0-.59.22L2.74 8.87c-.12.21-.08.47.12.61l2.03 1.58c-.05.3-.09.63-.09.94s.02.64.07.94l-2.03 1.58a.49.49 0 0 0-.12.61l1.92 3.32c.12.22.37.29.59.22l2.39-.96c.5.38 1.03.7 1.62.94l.36 2.54c.05.24.24.41.48.41h3.84c.24 0 .44-.17.47-.41l.36-2.54c.59-.24 1.13-.56 1.62-.94l2.39.96c.22.08.47 0 .59-.22l1.92-3.32c.12-.22.07-.47-.12-.61l-2.01-1.58zM12 15.6c-1.98 0-3.6-1.62-3.6-3.6s1.62-3.6 3.6-3.6 3.6 1.62 3.6 3.6-1.62 3.6-3.6 3.6z"/></svg></div></div><div class="pl" style="left:1320px;width:300px;top:191.4px">Id</div><div class="inp" style="left:1628.5px;top:187px;width:239.5px;height:20px"><div class="v" style="left:4px;top:3.2px;color:#222;font-size:12.3px">label.5</div></div><div class="pl" style="left:1322px;width:300px;top:249.6px">Is Inside Table</div><div class="a" style="left:1630.5px;top:247.5px;width:15px;height:15px;background:#1a73e8;border-radius:2.5px"><svg class="a" style="left:2px;top:2px" width="11" height="11" viewBox="0 0 11 11"><path d="M1.5 5.8 L4.3 8.5 L9.6 2.5" stroke="#fff" stroke-width="1.9" fill="none"/></svg></div><div class="pl" style="left:1322px;width:300px;top:269.5px">Show Control</div><div class="inp" style="left:1630.5px;top:266px;width:237.5px;height:19.5px"><div class="v" style="left:4px;top:2.8px;color:#222;font-size:12.3px">None</div><div class="caret" style="top:7.8px"></div></div><div class="pl" style="left:1350px;width:300px;top:328.8px">Is Visible</div><div class="inp" style="left:1657px;top:325px;width:211px;height:20px"><div class="gear"><svg width="13" height="13" viewBox="0 0 24 24"><path fill="#111" d="M19.14 12.94c.04-.3.06-.61.06-.94 0-.32-.02-.64-.07-.94l2.030-1.58a.49.49 0 0 0 .12-.61l-1.92-3.32a.488.488 0 0 0-.59-.22l-2.39.96c-.5-.38-1.03-.7-1.62-.94l-.36-2.54a.484.484 0 0 0-.48-.41h-3.84c-.24 0-.43.17-.47.41l-.36 2.54c-.59.24-1.13.57-1.62.94l-2.39-.96c-.22-.08-.47 0-.59.22L2.74 8.87c-.12.21-.08.47.12.61l2.03 1.58c-.05.3-.09.63-.09.94s.02.64.07.94l-2.03 1.58a.49.49 0 0 0-.12.61l1.92 3.32c.12.22.37.29.59.22l2.39-.96c.5.38 1.03.7 1.62.94l.36 2.54c.05.24.24.41.48.41h3.84c.24 0 .44-.17.47-.41l.36-2.54c.59-.24 1.13-.56 1.62-.94l2.39.96c.22.08.47 0 .59-.22l1.92-3.32c.12-.22.07-.47-.12-.61l-2.01-1.58zM12 15.6c-1.98 0-3.6-1.62-3.6-3.6s1.62-3.6 3.6-3.6 3.6 1.62 3.6 3.6-1.62 3.6-3.6 3.6z"/></svg></div></div><div class="pl" style="left:1350px;width:300px;top:351.9px">Display If</div><div class="inp" style="left:1657px;top:348px;width:211px;height:20px"><div class="gear"><svg width="13" height="13" viewBox="0 0 24 24"><path fill="#111" d="M19.14 12.94c.04-.3.06-.61.06-.94 0-.32-.02-.64-.07-.94l2.030-1.58a.49.49 0 0 0 .12-.61l-1.92-3.32a.488.488 0 0 0-.59-.22l-2.39.96c-.5-.38-1.03-.7-1.62-.94l-.36-2.54a.484.484 0 0 0-.48-.41h-3.84c-.24 0-.43.17-.47.41l-.36 2.54c-.59.24-1.13.57-1.62.94l-2.39-.96c-.22-.08-.47 0-.59.22L2.74 8.87c-.12.21-.08.47.12.61l2.03 1.58c-.05.3-.09.63-.09.94s.02.64.07.94l-2.03 1.58a.49.49 0 0 0-.12.61l1.92 3.32c.12.22.37.29.59.22l2.39-.96c.5.38 1.03.7 1.62.94l.36 2.54c.05.24.24.41.48.41h3.84c.24 0 .44-.17.47-.41l.36-2.54c.59-.24 1.13-.56 1.62-.94l2.39.96c.22.08.47 0 .59-.22l1.92-3.32c.12-.22.07-.47-.12-.61l-2.01-1.58zM12 15.6c-1.98 0-3.6-1.62-3.6-3.6s1.62-3.6 3.6-3.6 3.6 1.62 3.6 3.6-1.62 3.6-3.6 3.6z"/></svg></div></div><div class="pl" style="left:1350px;width:300px;top:374.6px">Tooltip</div><div class="inp" style="left:1657px;top:371px;width:211px;height:20px"><div class="gear"><svg width="13" height="13" viewBox="0 0 24 24"><path fill="#111" d="M19.14 12.94c.04-.3.06-.61.06-.94 0-.32-.02-.64-.07-.94l2.030-1.58a.49.49 0 0 0 .12-.61l-1.92-3.32a.488.488 0 0 0-.59-.22l-2.39.96c-.5-.38-1.03-.7-1.62-.94l-.36-2.54a.484.484 0 0 0-.48-.41h-3.84c-.24 0-.43.17-.47.41l-.36 2.54c-.59.24-1.13.57-1.62.94l-2.39-.96c-.22-.08-.47 0-.59.22L2.74 8.87c-.12.21-.08.47.12.61l2.03 1.58c-.05.3-.09.63-.09.94s.02.64.07.94l-2.03 1.58a.49.49 0 0 0-.12.61l1.92 3.32c.12.22.37.29.59.22l2.39-.96c.5.38 1.03.7 1.62.94l.36 2.54c.05.24.24.41.48.41h3.84c.24 0 .44-.17.47-.41l.36-2.54c.59-.24 1.13-.56 1.62-.94l2.39.96c.22.08.47 0 .59-.22l1.92-3.32c.12-.22.07-.47-.12-.61l-2.01-1.58zM12 15.6c-1.98 0-3.6-1.62-3.6-3.6s1.62-3.6 3.6-3.6 3.6 1.62 3.6 3.6-1.62 3.6-3.6 3.6z"/></svg></div></div><div class="pl" style="left:1350px;width:300px;top:397.6px">Text Wrap</div><div class="inp" style="left:1657px;top:393.5px;width:211px;height:20.0px"><div class="caret" style="top:8.0px"></div></div><div class="pl" style="left:1350px;width:300px;top:420.6px">Text Transformation</div><div class="inp" style="left:1657px;top:416.5px;width:211px;height:20.0px"><div class="v" style="left:4px;top:3.2px;color:#222;font-size:12.3px">Default</div><div class="caret" style="top:8.0px"></div></div><div class="pl" style="left:1350px;width:300px;top:444.0px">Dropdown Type</div><div class="inp" style="left:1657px;top:439.5px;width:211px;height:20.0px"><div class="v" style="left:4px;top:3.5px;color:#222;font-size:12.3px">Default</div><div class="caret" style="top:8.0px"></div></div><div class="pl" style="left:1549.7px;top:501.6px;text-align:left">Class</div><div class="inp" style="left:1586px;top:498.5px;width:282px;height:28.5px"><div class="v" style="left:5px;top:6.9px;color:#9a9a9a;font-size:13.2px">Select class...</div></div><svg class="a" style="left:1551px;top:577px" width="14" height="13" viewBox="0 0 14 13"><path d="M5.5 0 h3 v5 h5 v3 h-5 v5 h-3 v-5 h-5.5 v-3 h5.5z" fill="#111"/></svg><div class="t" style="left:1571.5px;top:578.1px;font-size:12.6px;color:#222">Add New Property</div>

<div id="vup" class="a"></div><div id="vdown" class="a"></div>
<!-- tab content -->
<svg class="a" style="left:328.5px;top:21px" width="12" height="15" viewBox="0 0 12 15"><path d="M0.6 0.6 H7.6 L11.4 4.4 V14.4 H0.6 Z" fill="none" stroke="#555" stroke-width="1.1"/><path d="M7.6 0.6 V4.4 H11.4" fill="none" stroke="#555" stroke-width="1"/><path d="M2.6 7.3 H9.4 M2.6 9.4 H9.4 M2.6 11.5 H9.4" stroke="#444" stroke-width="1"/></svg>
<div class="t" style="left:346px;top:21.3px;font-size:13.4px;font-style:italic;color:#222">MList</div>
<svg class="a" style="left:391px;top:22px" width="12" height="12" viewBox="0 0 16 16"><path d="M13.2 6.2 A5.5 5.5 0 0 0 3 4.8 M2.8 9.8 A5.5 5.5 0 0 0 13 11.2" stroke="#c4c4c4" stroke-width="2.2" fill="none"/><path d="M14.8 1.5 L14.8 7 L9.5 7 Z M1.2 14.5 L1.2 9 L6.5 9 Z" fill="#c4c4c4"/></svg>
<svg class="a" style="left:408px;top:25px" width="9" height="9" viewBox="0 0 9 9"><path d="M1 1 L8 8 M8 1 L1 8" stroke="#c4c4c4" stroke-width="2.2"/></svg>
<!-- toolbar -->
<svg class="a" style="left:1628px;top:14px" width="20" height="15" viewBox="0 0 20 15"><path d="M6 2.5 L1.5 7.5 L6 12.5 M14 2.5 L18.5 7.5 L14 12.5 M11.5 0.5 L8.5 14.5" stroke="#fff" stroke-width="1.5" fill="none"/></svg>
<div class="a" style="left:1614px;top:0;width:1.5px;height:44px;background:#5d6f7a"></div>
<div class="a" style="left:1615px;top:43px;width:47px;height:2px;background:#bcc6cc"></div>
<svg class="a" style="left:1680px;top:16px" width="13" height="12" viewBox="0 0 13 12"><path d="M0 0 H4 V1.5 H1.5 V4 H0Z M13 0 H9 V1.5 H11.5 V4 H13Z M0 12 H4 V10.5 H1.5 V8 H0Z M13 12 H9 V10.5 H11.5 V8 H13Z" fill="#fff"/></svg>
<svg class="a" style="left:1725px;top:14.5px" width="17" height="14" viewBox="0 0 17 14">
<g fill="#fff"><circle cx="5.5" cy="7" r="4"/><g stroke="#fff" stroke-width="2.2"><path d="M5.5 1.2 V12.8 M-0.3 7 H11.3 M1.4 2.9 L9.6 11.1 M9.6 2.9 L1.4 11.1"/></g><circle cx="5.5" cy="7" r="1.6" fill="#0095d9"/>
<circle cx="13.2" cy="3.3" r="2.3"/><g stroke="#fff" stroke-width="1.3"><path d="M13.2 0 V6.6 M9.9 3.3 H16.5 M10.9 1 L15.5 5.6 M15.5 1 L10.9 5.6"/></g><circle cx="13.2" cy="3.3" r="0.9" fill="#0095d9"/>
<circle cx="13.2" cy="10.7" r="2.3"/><g stroke="#fff" stroke-width="1.3"><path d="M13.2 7.4 V14 M9.9 10.7 H16.5 M10.9 8.4 L15.5 13 M15.5 8.4 L10.9 13"/></g><circle cx="13.2" cy="10.7" r="0.9" fill="#0095d9"/></g></svg>
<svg class="a" style="left:1773px;top:15px" width="16" height="13" viewBox="0 0 16 13"><rect x="0.9" y="0.9" width="14.2" height="9" rx="1" fill="none" stroke="#fff" stroke-width="1.8"/><rect x="6" y="10" width="4" height="2" fill="#fff"/><rect x="4" y="11.5" width="8" height="1.5" fill="#fff"/></svg>
<!-- left nav icons -->
<svg class="a" style="left:61px;top:63px" width="14" height="17" viewBox="0 0 14 17"><path d="M0.8 0.8 H9 L13.2 5 V16.2 H0.8Z" fill="none" stroke="#fff" stroke-width="1.5"/><path d="M9 0.8 V5 H13.2" fill="none" stroke="#fff" stroke-width="1.2"/><path d="M3.3 8.3 H10.7 M3.3 10.8 H10.7 M3.3 13.3 H10.7" stroke="#fff" stroke-width="1.4"/></svg>
<svg class="a" style="left:58px;top:107px" width="24" height="22" viewBox="0 0 24 22"><g fill="#fff"><rect x="2" y="8" width="14" height="12.8" rx="0.8"/><circle cx="9.2" cy="4.4" r="3"/><rect x="8" y="6" width="2.5" height="3"/><circle cx="20" cy="15" r="3"/><rect x="15" y="14" width="3" height="2.2"/></g><circle cx="9.2" cy="18.2" r="2.3" fill="#666"/><rect x="8" y="18.2" width="2.4" height="3" fill="#666"/></svg>
<svg class="a" style="left:59px;top:158px" width="19" height="19" viewBox="0 0 19 19"><path d="M1 5 L5 1 H11 V6 M1 5 V13 H6 M1 5 H5 V1" fill="none" stroke="#fff" stroke-width="1.4"/><path d="M7 6.5 H13.5 L17.5 10.5 V18 H7Z" fill="none" stroke="#fff" stroke-width="1.4"/><path d="M13.5 6.5 V10.5 H17.5" fill="none" stroke="#fff" stroke-width="1.2"/></svg>
<svg class="a" style="left:60px;top:207px" width="16" height="16" viewBox="0 0 16 16"><rect x="0" y="0" width="16" height="16" rx="3" fill="#fff"/><path d="M3.5 12 C3.5 7.5 6 6 10 6 V3.5 L13.5 7.5 L10 11.5 V9 C7 9 5 9.5 3.5 12Z" fill="#666"/></svg>
<svg class="a" style="left:58.5px;top:252.5px" width="20" height="20" viewBox="0 0 24 24"><path fill="#fff" d="M19.14 12.94c.04-.3.06-.61.06-.94 0-.32-.02-.64-.07-.94l2.03-1.58a.49.49 0 0 0 .12-.61l-1.92-3.32a.488.488 0 0 0-.59-.22l-2.39.96c-.5-.38-1.03-.7-1.62-.94l-.36-2.54a.484.484 0 0 0-.48-.41h-3.84c-.24 0-.43.17-.47.41l-.36 2.54c-.59.24-1.13.57-1.62.94l-2.39-.96c-.22-.08-.47 0-.59.22L2.74 8.87c-.12.21-.08.47.12.61l2.03 1.58c-.05.3-.09.63-.09.94s.02.64.07.94l-2.03 1.58a.49.49 0 0 0-.12.61l1.92 3.32c.12.22.37.29.59.22l2.39-.96c.5.38 1.03.7 1.62.94l.36 2.54c.05.24.24.41.48.41h3.84c.24 0 .44-.17.47-.41l.36-2.54c.59-.24 1.13-.56 1.62-.94l2.39.96c.22.08.47 0 .59-.22l1.92-3.32c.12-.22.07-.47-.12-.61l-2.01-1.58zM12 15.6c-1.98 0-3.6-1.62-3.6-3.6s1.62-3.6 3.6-3.6 3.6 1.62 3.6 3.6-1.62 3.6-3.6 3.6z"/></svg>
<!-- components header icons -->
<svg class="a" style="left:236.5px;top:105px" width="16" height="14" viewBox="0 0 16 14"><g fill="#1a8fd6"><rect x="6" y="0" width="4" height="3.5"/><rect x="0" y="10" width="4" height="4"/><rect x="6" y="10" width="4" height="4"/><rect x="12" y="10" width="4" height="4"/></g><path d="M8 3.5 V10 M2 10 V6.8 H14 V10" stroke="#1a8fd6" stroke-width="1.3" fill="none"/></svg>
<svg class="a" style="left:262.5px;top:105px" width="13" height="13" viewBox="0 0 13 13"><path d="M6.5 0 V13 M0 6.5 H13" stroke="#1a8fd6" stroke-width="1.6"/></svg>
<svg class="a" style="left:285.8px;top:104.8px" width="14" height="14.5" viewBox="0 0 16 16"><path d="M13.6 6.4 A6 6 0 0 0 2.6 5.2 M2.4 9.6 A6 6 0 0 0 13.4 10.8" stroke="#1793dc" stroke-width="2.3" fill="none"/><path d="M15.2 1.2 L15.2 7.4 L9.2 7.4 Z M0.8 14.8 L0.8 8.6 L6.8 8.6 Z" fill="#1793dc"/></svg>
<!-- tree icons -->
<svg class="a" style="left:121px;top:134px" width="12" height="10" viewBox="0 0 12 10"><path d="M0 1 Q0 0 1 0 H4.5 L5.5 1.2 H11 Q12 1.2 12 2.2 V9 Q12 10 11 10 H1 Q0 10 0 9Z" fill="#7a7a7a"/></svg>
<svg class="a" style="left:121px;top:156px" width="14" height="11" viewBox="0 0 14 11"><path d="M0 1 Q0 0 1 0 H4.5 L5.5 1.2 H10.5 Q11.5 1.2 11.5 2.2 V3.5 H3 L0 10Z M3.2 4.5 H14 L11 11 H0Z" fill="#7a7a7a"/></svg>
<svg class="a" style="left:136px;top:182.5px" width="8" height="5" viewBox="0 0 8 5"><path d="M0 0 H8 L4 5Z" fill="#1a8fd6"/></svg>
<svg class="a" style="left:174px;top:206px" width="8.5" height="5" viewBox="0 0 8 5"><path d="M0 0 H8 L4 5Z" fill="#777"/></svg>
<svg class="a" style="left:212px;top:229px" width="8.5" height="5" viewBox="0 0 8 5"><path d="M0 0 H8 L4 5Z" fill="#777"/></svg>
<svg class="a" style="left:174px;top:272px" width="5" height="9" viewBox="0 0 5 9"><path d="M0 0 V9 L5 4.5Z" fill="#777"/></svg>
<svg class="a" style="left:225.7px;top:246px" width="12" height="14" viewBox="0 0 12 14"><path d="M0.6 0.6 H7.5 L11.4 4.5 V13.4 H0.6Z" fill="none" stroke="#1a8fd6" stroke-width="1.05"/><path d="M7.5 0.6 V4.5 H11.4" fill="none" stroke="#1a8fd6" stroke-width="1"/><path d="M2.8 6.5 H9.2 M2.8 8.6 H9.2 M2.8 10.7 H9.2" stroke="#1a8fd6" stroke-width="1"/></svg>
<svg class="a" style="left:282.5px;top:247.5px" width="16.5" height="11" viewBox="0 0 16.5 11"><path d="M1 5.5 Q8.25 -2.8 15.5 5.5 Q8.25 13.8 1 5.5Z" fill="none" stroke="#1e8a1e" stroke-width="1.4"/><circle cx="8.25" cy="5" r="3.7" fill="#0f870f"/><path d="M6.6 3.6 Q7.2 2.6 8.2 2.4" stroke="#8fc98f" stroke-width="0.7" fill="none"/></svg>




<div id="pinkline" class="a"></div>

<div id="blueline" class="a"></div>
<div id="split2" class="a"></div>

<div class="t" style="left:106px;top:62.2px;font-size:12.5px;color:#222">SmartUXDemoApp</div>
<div class="t" style="left:106px;top:105.2px;font-size:13.3px;color:#222">Components</div>
<div class="t tree" style="left:137px;top:132.2px">app</div>
<div class="t tree" style="left:139px;top:155.2px">magic</div>
<div class="t tree" style="left:147.7px;top:178.2px">MagicGenLibModule</div>
<div class="t tree" style="left:185.7px;top:201.2px">Members</div>
<div class="t tree" style="left:224px;top:224.2px">MList</div>
<div class="t tree" style="left:241px;top:247.2px">MList</div>
<div class="t tree" style="left:183px;top:270.2px">mainWC</div>
<!-- selection dashed -->
<div class="a" style="left:1125px;top:293px;width:108.5px;height:39px;background:rgba(120,120,120,0.14);border:2px dashed #9e9e9e"></div>
<!-- magic logo -->
<div class="a" style="left:82.5px;top:775.5px;width:54px;height:54px;border-radius:50%;background:#fff;box-shadow:0 1px 4px rgba(0,0,0,0.35)"></div>
<svg class="a" style="left:82.5px;top:775.5px" width="54" height="54" viewBox="0 0 54 54">
<defs><linearGradient id="mg" x1="0.7" y1="0" x2="0.3" y2="1"><stop offset="0" stop-color="#12a3dc"/><stop offset="0.55" stop-color="#0a79be"/><stop offset="1" stop-color="#0762a6"/></linearGradient></defs>
<path d="M36 2.5 C44 8 49 19 48.5 32 C48 45 39 52.5 27 52.5 C14 52.5 4 46 4 36 C4 27 12 22 20 18 C27 14 31 8 36 2.5Z" fill="url(#mg)"/>
<text x="27.5" y="34" font-family="Liberation Sans" font-size="13" fill="#fff" text-anchor="middle" letter-spacing="-0.7" stroke="#fff" stroke-width="0.35">magic</text>
<circle cx="46.5" cy="13" r="0.9" fill="#fff"/>
</svg>
<div class="a" style="left:118.5px;top:774px;width:20px;height:20px;border-radius:50%;background:#d4000d"></div>
<div class="t" style="left:124.5px;top:777.5px;font-size:13px;font-weight:bold;color:#fff">7</div>
<!-- yellow overlays -->
<svg class="a" style="left:0;top:0" width="1920" height="868" viewBox="0 0 1920 868">
<g fill="none" stroke="#fed23f">
<rect x="1111" y="278" width="137" height="68.5" stroke-width="10"/>
<rect x="323" y="610" width="1209" height="125" stroke-width="10"/>
<rect x="1587" y="-20" width="96" height="86.5" stroke-width="10"/>
<g stroke-width="13.3" stroke-linecap="round" stroke-linejoin="round">
<path d="M923.2 401.9 C942.4 340 987.6 309.7 1091 313.8"/>
<path d="M1060.8 280.5 L1093.9 313.8 L1060.8 348.2"/>
<path d="M1400.1 113.8 C1410.3 59.5 1469 19.8 1569 24.5"/>
<path d="M1538.3 -10.8 L1571.5 24.5 L1538.3 59.8"/>
</g></g></svg>
</body></html>
